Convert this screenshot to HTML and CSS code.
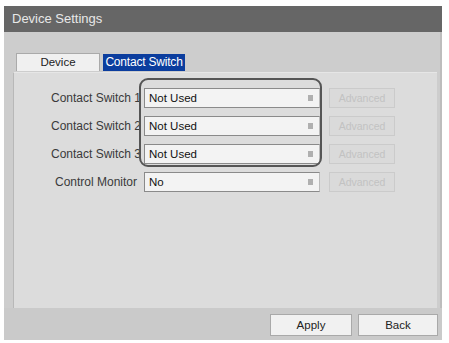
FILE: index.html
```html
<!DOCTYPE html>
<html lang="en">
<head>
    <meta charset="UTF-8">
    <title>Device Settings</title>
    <link rel="stylesheet" href="styles.css">
</head>
<body>
    <div class="window">
        <header class="titlebar">Device Settings</header>

        <div class="tabs">
            <div class="tab">Device</div>
            <div class="tab active">Contact Switch</div>
        </div>

        <section class="panel">
            <div class="rows">
                <div class="row">
                    <label>Contact Switch 1</label>
                    <div class="select">Not Used<span class="arrow"></span></div>
                    <button class="adv" disabled>Advanced</button>
                </div>
                <div class="row">
                    <label>Contact Switch 2</label>
                    <div class="select">Not Used<span class="arrow"></span></div>
                    <button class="adv" disabled>Advanced</button>
                </div>
                <div class="row">
                    <label>Contact Switch 3</label>
                    <div class="select">Not Used<span class="arrow"></span></div>
                    <button class="adv" disabled>Advanced</button>
                </div>
                <div class="row">
                    <label>Control Monitor</label>
                    <div class="select">No<span class="arrow"></span></div>
                    <button class="adv" disabled>Advanced</button>
                </div>
                <!-- callout ring round the three switches -->
                <div class="ring"></div>
            </div>
        </section>

        <footer class="actions">
            <button class="btn">Apply</button>
            <button class="btn">Back</button>
        </footer>
    </div>
</body>
</html>
```

FILE: styles.css
```css
body {
    margin: 0;
    background-color: #fff;
    font-family: "Liberation Sans", Arial, sans-serif;
}

.window {
    margin: 6px 0 0 4px;
    width: 438px;
    height: 334px;
    background-color: #cdcdcd;
    display: flex;
    flex-direction: column;
    box-shadow: inset -2px 0 0 #bdbdbd;
}

.titlebar {
    height: 26px;
    background-color: #666;
    color: #e8e8e8;
    font-size: 13px;
    line-height: 26px;
    padding-left: 8px;
}

.tabs {
    display: flex;
    gap: 3px;
    padding: 21px 0 0 12px;
    height: 19px;
}

.tab {
    width: 82px;
    height: 17px;
    font-size: 11.5px;
    line-height: 17px;
    text-align: center;
    color: #222;
    background-color: #f0f0f0;
    border: 1px solid #aaa;
    border-bottom: none;
}

.tab.active {
    width: 82px;
    height: 17px;
    margin-top: 1px;
    border: none;
    background-color: #0b3d9e;
    color: #fff;
    font-size: 12px;
    letter-spacing: -0.2px;
}

.panel {
    margin: 0 5px 0 9px;
    height: 236px;
    background-color: #dcdcdc;
    border-left: 1px solid #b8b8b8;
    border-top: 1px solid #e6e6e6;
    box-sizing: border-box;
    padding-top: 15px;
}

.rows {
    position: relative;
    display: flex;
    flex-direction: column;
    gap: 8px;
}

.row {
    display: flex;
    align-items: center;
    height: 20px;
}

.row label {
    width: 94px;
    margin: 0 1px 0 35px;
    text-align: center;
    font-size: 12px;
    color: #3a3a3a;
    white-space: nowrap;
}

.select {
    position: relative;
    width: 170px;
    height: 18px;
    line-height: 18px;
    padding-left: 4px;
    box-sizing: content-box;
    font-size: 11.5px;
    color: #111;
    background-color: #f3f3f3;
    border: 1px solid #8a8a8a;
    border-right-color: #bbb;
}

.arrow {
    position: absolute;
    right: 6px;
    top: 6px;
    width: 5px;
    height: 6px;
    background-color: #b0b0b0;
}

.adv {
    margin-left: 9px;
    width: 66px;
    height: 20px;
    font-family: "Liberation Sans", Arial, sans-serif;
    font-size: 10.5px;
    color: #c2c2c2;
    background-color: #dadada;
    border: 1px solid #cbcbcb;
    padding: 0;
}

.ring {
    position: absolute;
    left: 125px;
    top: -10px;
    width: 179px;
    height: 85px;
    border: 2px solid #555;
    border-radius: 9px;
}

.actions {
    flex: 1;
    display: flex;
    justify-content: flex-end;
    align-items: flex-start;
    gap: 6px;
    padding: 6px 4px 0 0;
    background-color: #cacaca;
}

.btn {
    width: 82px;
    height: 22px;
    font-family: "Liberation Sans", Arial, sans-serif;
    font-size: 11.5px;
    color: #222;
    background-color: #f1f1f1;
    border: 1px solid #a9a9a9;
    padding: 0;
}

.btn + .btn {
    width: 80px;
}
```
